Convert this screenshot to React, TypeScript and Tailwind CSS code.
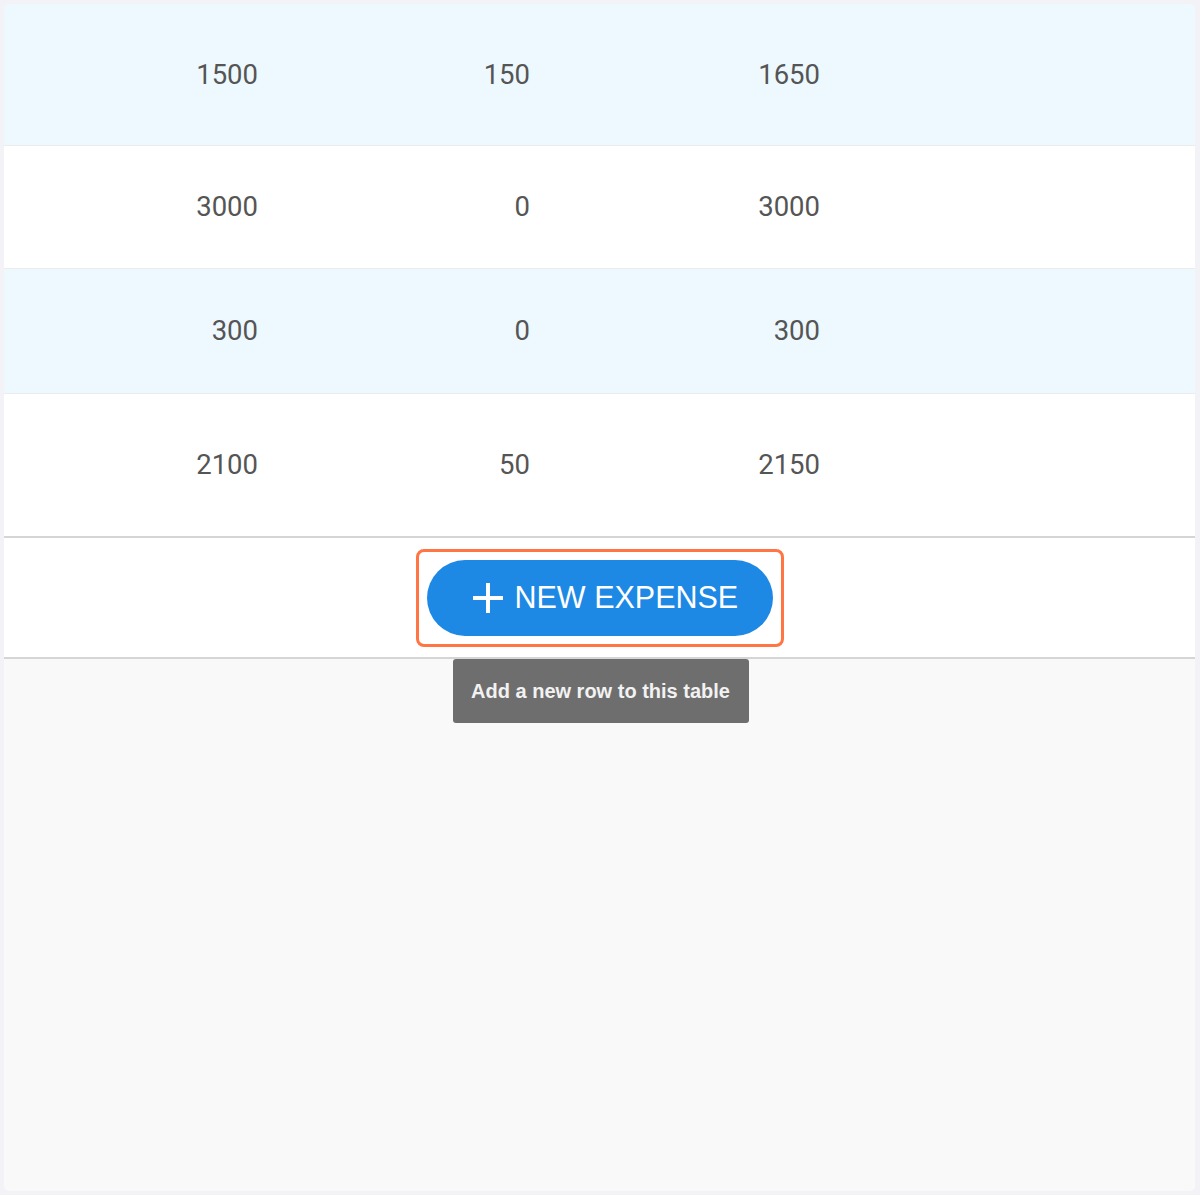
const rows = [
  { a: "1500", b: "150", c: "1650", tint: true, h: "h-[142px]" },
  { a: "3000", b: "0", c: "3000", tint: false, h: "h-[123px]" },
  { a: "300", b: "0", c: "300", tint: true, h: "h-[125px]" },
  { a: "2100", b: "50", c: "2150", tint: false, h: "h-[142px]" },
];

const PlusIcon = () => (
  <svg width="32" height="32" viewBox="0 0 32 32" fill="none">
    <path d="M16 1v30M1 16h30" stroke="white" strokeWidth="4" />
  </svg>
);

export default function App() {
  return (
    <div className="w-[1200px] h-[1195px] bg-[#f3f2f7] pt-[4px] pl-[4px] pr-[5px] pb-[4px]">
      <div className="h-full rounded-[5px] overflow-hidden bg-[#f9f9f9] flex flex-col">
        {rows.map((r, i) => (
          <div
            key={i}
            className={`${r.h} flex items-center shrink-0 text-[27.5px] text-[#555] font-['Roboto',sans-serif] ${
              r.tint ? "bg-[#eef9ff]" : "bg-white"
            } ${i < rows.length - 1 ? "border-b border-[#ececec]" : ""}`}
          >
            <div className="w-[254px] text-right">{r.a}</div>
            <div className="w-[272px] text-right">{r.b}</div>
            <div className="w-[290px] text-right">{r.c}</div>
          </div>
        ))}
        <div className="relative shrink-0 h-[123px] bg-white border-y-2 border-[#d5d5d5] flex items-center justify-center">
          <div className="rounded-[8px] border-[3px] border-[#ff7543] p-[8px]">
            <button className="w-[346px] h-[76px] rounded-full bg-[#1e88e5] flex items-center gap-[11px] pl-[45px] text-white text-[30.5px] font-['Liberation_Sans',Arial,sans-serif] leading-none">
              <PlusIcon />
              <span>NEW EXPENSE</span>
            </button>
          </div>
          <div className="absolute top-[121px] left-1/2 -translate-x-1/2 ml-[1px] w-[296px] h-[64px] rounded-[3px] bg-[#6e6e6e] flex items-center justify-center text-[20px] font-bold text-[#f2f2f2] font-['Liberation_Sans',Arial,sans-serif]">
            Add a new row to this table
          </div>
        </div>
        <div className="flex-1" />
      </div>
    </div>
  );
}
